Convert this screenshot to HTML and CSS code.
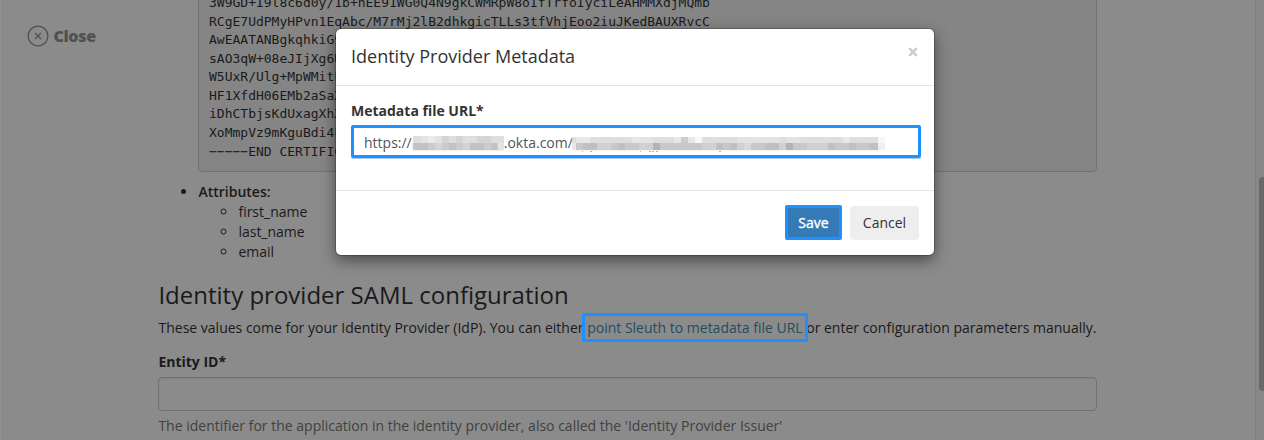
FILE: index.html
```html
<!DOCTYPE html>
<html lang="en">
<head>
<meta charset="utf-8">
<title>Identity provider SAML configuration</title>
<link rel="stylesheet" href="styles.css">
</head>
<body>
<div class="page">
  <aside class="side">
    <a class="close-link">
      <svg class="close-icon" viewBox="0 0 22 22"><circle cx="11" cy="11" r="9.9"/><path d="M8 8l6 6M14 8l-6 6"/></svg>
      <span>Close</span>
    </a>
  </aside>
  <main class="content">
    <pre class="cert">3W9GD+I9l8c6d0y/1b+hEE91WG0Q4N9gkCWMRpW8oIfTrfoIyciLeAHMMXdjMQmb
RCgE7UdPMyHPvn1EqAbc/M7rMj2lB2dhkgicTLLs3tfVhjEoo2iuJKedBAUXRvcC
AwEAATANBgkqhkiG9
sAO3qW+08eJIjXg6U
W5UxR/Ulg+MpWMitF
HF1XfdH06EMb2aSaX
iDhCTbjsKdUxagXhX
XoMmpVz9mKguBdi4F
−−−−−END CERTIFIC</pre>
    <ul class="attributes">
      <li><b>Attributes:</b>
        <ul class="names"><li>first_name</li><li>last_name</li><li>email</li></ul>
      </li>
    </ul>
    <h2 class="heading">Identity provider SAML configuration</h2>
    <p class="intro">These values come for your Identity Provider (IdP). You can either <a class="link">point Sleuth to metadata file URL</a> or enter configuration parameters manually.</p>
    <label class="label">Entity ID*</label>
    <div class="input"></div>
    <p class="help">The identifier for the application in the identity provider, also called the 'Identity Provider Issuer'</p>
  </main>
  <div class="track"><div class="thumb"></div></div>
</div>
<div class="modal">
  <header class="modal-head">
    <h4 class="modal-title">Identity Provider Metadata</h4>
    <svg class="dismiss" viewBox="0 0 10 10"><path d="M1.2 1.2l7.6 7.6M8.8 1.2l-7.6 7.6"/></svg>
  </header>
  <section class="modal-body">
    <label class="modal-label">Metadata file URL*</label>
    <div class="url">
      <span>https://</span>
      <svg class="mask mask-host" viewBox="0 0 92 15" shape-rendering="crispEdges">
        <path fill="#dedede" d="M1 0h91v7H1z"/>
        <path fill="#cbcbcb" d="M1 7h85v7H1z"/>
        <path fill="#eaeaea" d="M16 0h7v7h-7zM0 7h1v7H0z"/>
        <path fill="#e4e4e4" d="M9 0h7v7H9zM23 0h7v7h-7zM86 7h6v7h-6z"/>
        <path fill="#d4d4d4" d="M30 0h7v7h-7zM44 0h7v7h-7zM65 0h14v7H65zM23 7h7v7h-7zM51 7h7v7h-7z"/>
        <path fill="#c2c2c2" d="M2 7h14v7H2zM37 7h7v7h-7zM58 7h14v7H58zM79 7h6v7h-6z"/>
        <path fill="#f3f3f3" d="M1 14h91v1H1z"/>
      </svg>
      <span>.okta.com/</span>
      <svg class="mask mask-path" viewBox="0 0 313 15" shape-rendering="crispEdges">
        <path fill="#dedede" d="M0 1h306v6H0z"/>
        <path fill="#c8c8c8" d="M4 7h302v7H4z"/>
        <path fill="#e8e8e8" d="M0 7h4v7H0zM4 1h14v6H4zM60 1h7v6h-7zM102 1h7v6h-7zM116 1h7v6h-7zM186 1h14v6h-14zM271 1h7v6h-7z"/>
        <path fill="#e3e3e3" d="M67 1h14v6H67zM165 1h42v6h-42zM214 1h14v6h-14z"/>
        <path fill="#d1d1d1" d="M25 7h14v7H25zM67 7h14v7H67zM130 7h14v7h-14zM165 7h14v7h-14zM207 7h7v7h-7zM235 7h21v7h-21z"/>
        <path fill="#dadada" d="M172 7h7v7h-7z"/>
        <path fill="#c0c0c0" d="M11 7h14v7H11zM46 7h7v7h-7zM144 7h7v7h-7zM158 7h7v7h-7zM193 7h14v7h-14zM256 7h7v7h-7zM277 7h7v7h-7zM298 7h8v7h-8z"/>
        <path fill="#cccccc" d="M109 1h7v6h-7z"/>
        <path fill="#b3b3b3" d="M81 7h7v7h-7zM214 7h7v7h-7z"/>
        <path fill="#f7f7f7" d="M123 1h7v6h-7zM306 1h7v6h-7zM4 14h302v1H4z"/>
        <path fill="#efefef" d="M306 7h7v7h-7z"/>
        <path fill="#b5b5b5" d="M10 15h1v1h-1zM18 15h2v1h-2zM68 15h1v1h-1zM77 15h2v1h-2zM80 15h2v1h-2zM84 15h2v1h-2zM147 15h2v1h-2z"/>
      </svg>
    </div>
  </section>
  <footer class="modal-foot">
    <button class="btn save">Save</button>
    <button class="btn cancel">Cancel</button>
  </footer>
</div>
</body>
</html>
```

FILE: styles.css
```css
* { box-sizing: border-box; }
body { margin: 0; width: 1264px; height: 440px; overflow: hidden; background: #8b8b8b; color: #1a1a1a; font: 14px/20px "Open Sans", sans-serif; }
.page { display: flex; height: 440px; overflow: hidden; border-left: 1px solid #949494; }
.side { width: 157px; padding: 25px 0 0 26.4px; flex: none; }
.close-link { display: flex; align-items: center; gap: 4px; color: #505050; font-size: 16px; line-height: 22px; font-weight: 800; letter-spacing: -.3px; }
.close-icon { width: 22px; height: 22px; fill: none; stroke: #505050; stroke-width: 1.3; }
.content { width: 939px; flex: none; }
.cert { margin: -17px 0 10px 40px; height: 189px; padding: 10px; border: 1px solid #727272; border-radius: 4px; background: #858585; font: 13px/18.57px "DejaVu Sans Mono", monospace; overflow: hidden; }
.attributes { margin: 0 0 20px; padding-left: 40.4px; }
.names { padding-left: 40px; margin: 0; }
.attributes b { font-weight: 600; }
.heading { margin: 0 0 10px; padding-left: .4px; font-size: 24px; line-height: 26px; font-weight: 400; }
.intro { margin: 0 0 14px; padding-left: .5px; white-space: nowrap; }
.link { color: #214e5c; outline: 3px solid #1e90ff; outline-offset: 2px; }
.label { display: block; padding-left: .4px; font-weight: 700; margin-bottom: 5px; }
.input { height: 34px; border: 1px solid #707070; border-radius: 4px; box-shadow: inset 0 1px 1px #828282; }
.help { margin: 5px 0 0; padding-left: .4px; color: #414141; }
.track { margin-left: auto; width: 9px; border-left: 1px solid #7c7c7c; background: #888; padding: 177px 0 0 3px; }
.thumb { height: 214px; border-radius: 4px 0 0 4px; background: #696969; }
.modal { position: absolute; left: 336px; top: 29px; width: 598px; height: 226px; background: #fff; border-radius: 5px; box-shadow: 0 0 0 1px rgba(0,0,0,.2), 0 5px 15px rgba(0,0,0,.5); color: #333; }
.modal-head { height: 57px; border-bottom: 1px solid #e5e5e5; padding: 15px; display: flex; justify-content: space-between; }
.modal-title { margin: 0; font-size: 18px; line-height: 25px; font-weight: 400; }
.dismiss { width: 10px; height: 10px; margin: 3px 1px 0 0; fill: none; stroke: #ccc; stroke-width: 2.4; }
.modal-body { height: 105px; border-bottom: 1px solid #e5e5e5; padding: 15px 13px 0 15px; }
.modal-label { display: block; font-weight: 700; margin-bottom: 4px; }
.url { display: flex; align-items: center; height: 33px; border: 3px solid #1e90ff; border-radius: 2px; box-shadow: 0 1px 0 #a5cdf5; padding: 3px 0 0 10px; color: #555; white-space: nowrap; }
.mask { height: 15px; flex: none; overflow: visible; }
.mask-host { width: 92px; }
.mask-path { width: 313px; margin-left: -1px; }
.modal-foot { display: flex; justify-content: flex-end; gap: 8px; padding: 14px 15px; }
.btn { border: 0; padding: 0; font: inherit; border-radius: 4px; height: 34px; }
.save { width: 57px; height: 35px; border: 3px solid #1e90ff; border-radius: 2px; background: #337ab7; color: #fff; -webkit-text-stroke: .35px #fff; }
.cancel { width: 69px; background: #eee; color: #333; margin-top: 1px; }
```
